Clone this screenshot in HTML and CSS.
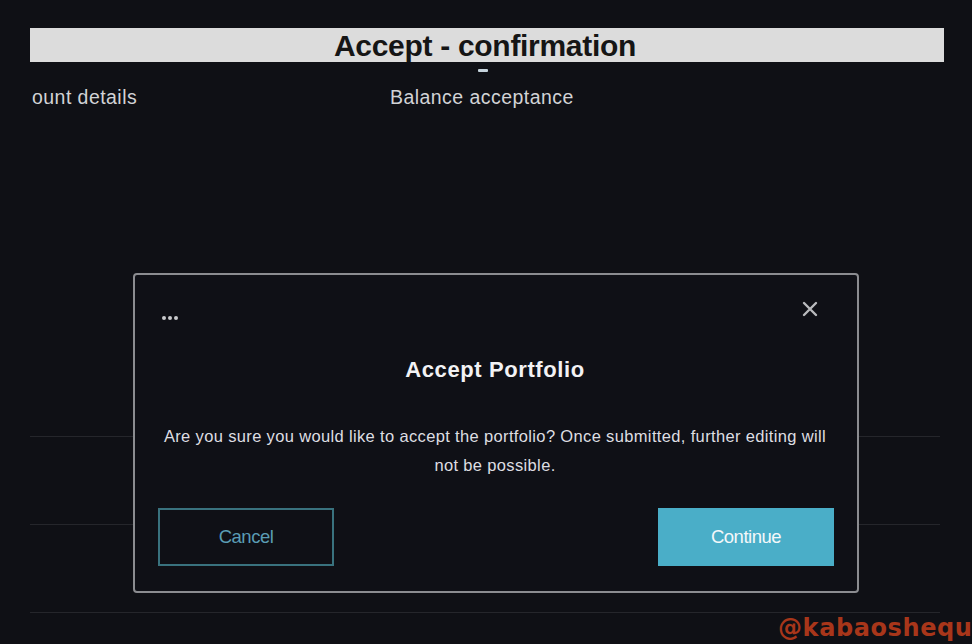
FILE: index.html
```html
<!DOCTYPE html>
<html lang="en">
<head>
<meta charset="utf-8">
<title>Accept - confirmation</title>
<link rel="stylesheet" href="styles.css">
</head>
<body>
<div class="page">
  <header class="titlebar"><h1 class="title">Accept - confirmation</h1></header>
  <div class="marker"></div>
  <nav class="tabs">
    <span class="tab tab-first">ount details</span>
    <span class="tab">Balance acceptance</span>
  </nav>
  <div class="content"></div>
  <div class="rows">
    <div class="row"></div>
    <div class="row"></div>
    <div class="row row-last"></div>
  </div>
</div>

<div class="modal" role="dialog" aria-labelledby="modal-title">
  <div class="modal-head">
    <span class="dots"><i></i><i></i><i></i></span>
    <button class="close" aria-label="Close">
      <svg width="16" height="16" viewBox="0 0 16 16"><path d="M2 2 L14 14 M14 2 L2 14" stroke="#b9babd" stroke-width="2.4" stroke-linecap="round"/></svg>
    </button>
  </div>
  <h2 class="modal-title" id="modal-title">Accept Portfolio</h2>
  <p class="modal-text">Are you sure you would like to accept the portfolio? Once submitted, further editing will not be possible.</p>
  <div class="modal-actions">
    <button class="btn btn-cancel">Cancel</button>
    <button class="btn btn-continue">Continue</button>
  </div>
</div>

<div class="watermark">@kabaoshequ</div>
</body>
</html>
```
FILE: styles.css
```css
html, body {
  margin: 0;
  padding: 0;
  background: #0f1015;
  width: 972px;
  height: 644px;
  overflow: hidden;
  font-family: "Liberation Sans", Arial, sans-serif;
}

.page {
  padding: 28px 28px 0 30px;
  display: flex;
  flex-direction: column;
}

.titlebar {
  background: #dcdcdc;
  height: 34px;
  display: flex;
  align-items: center;
  justify-content: center;
  width: 914px;
}

.title {
  margin: 0;
  font-size: 30px;
  font-weight: bold;
  color: #151515;
  letter-spacing: -0.3px;
  line-height: 34px;
  transform: translate(-2px, 1px);
}

.marker {
  width: 10px;
  height: 3px;
  background: #c5d3dc;
  margin: 7px 0 0 448px;
  border-radius: 1px;
}

.tabs {
  display: flex;
  margin-top: 14px;
  height: 22px;
  align-items: center;
}

.tab {
  color: #d2d3d6;
  font-size: 19.5px;
  letter-spacing: 0.45px;
}

.tab-first {
  margin-left: 2px;
  width: 358px;
}

.content {
  height: 328px;
}

.rows {
  width: 910px;
}

.row {
  height: 87px;
  border-top: 1px solid #25262b;
}

.row-last {
  height: 0;
}

.modal {
  position: absolute;
  left: 133px;
  top: 273px;
  width: 726px;
  height: 320px;
  box-sizing: border-box;
  border: 2px solid #8b8c90;
  border-radius: 4px;
  background: #0f1016;
  padding: 16px 23px 0 23px;
  display: flex;
  flex-direction: column;
}

.modal-head {
  height: 36px;
  display: flex;
  justify-content: space-between;
  align-items: center;
}

.dots {
  display: flex;
  gap: 2px;
  align-self: flex-end;
  margin: 0 0 7px 4px;
}

.dots i {
  width: 4px;
  height: 4px;
  border-radius: 50%;
  background: #c9cacd;
}

.close {
  background: none;
  border: 0;
  padding: 0;
  width: 16px;
  height: 16px;
  margin-right: 16px;
  display: flex;
}

.modal-title {
  margin: 29px 0 0 0;
  text-align: center;
  color: #f2f2f4;
  font-size: 22px;
  line-height: 28px;
  font-weight: bold;
  letter-spacing: 0.6px;
  transform: translateX(-1px);
}

.modal-text {
  margin: 38px auto 0 auto;
  width: 672px;
  text-align: center;
  color: #dedee2;
  font-size: 16.5px;
  line-height: 29px;
  letter-spacing: 0.35px;
  transform: translateX(-1px);
}

.modal-actions {
  margin-top: 28px;
  display: flex;
  justify-content: space-between;
}

.btn {
  width: 176px;
  height: 58px;
  box-sizing: border-box;
  font-family: "Liberation Sans", Arial, sans-serif;
  font-size: 18.5px;
  letter-spacing: -0.5px;
}

.btn-cancel {
  background: transparent;
  border: 2px solid #39727e;
  color: #5a9cb4;
}

.btn-continue {
  background: #4aaec8;
  border: 0;
  color: #f4f8fa;
}

.watermark {
  position: absolute;
  left: 778px;
  top: 613px;
  color: #a8361a;
  font-family: "DejaVu Sans", sans-serif;
  font-weight: bold;
  font-size: 24px;
  line-height: 30px;
  white-space: nowrap;
  letter-spacing: 0.6px;
}
```
